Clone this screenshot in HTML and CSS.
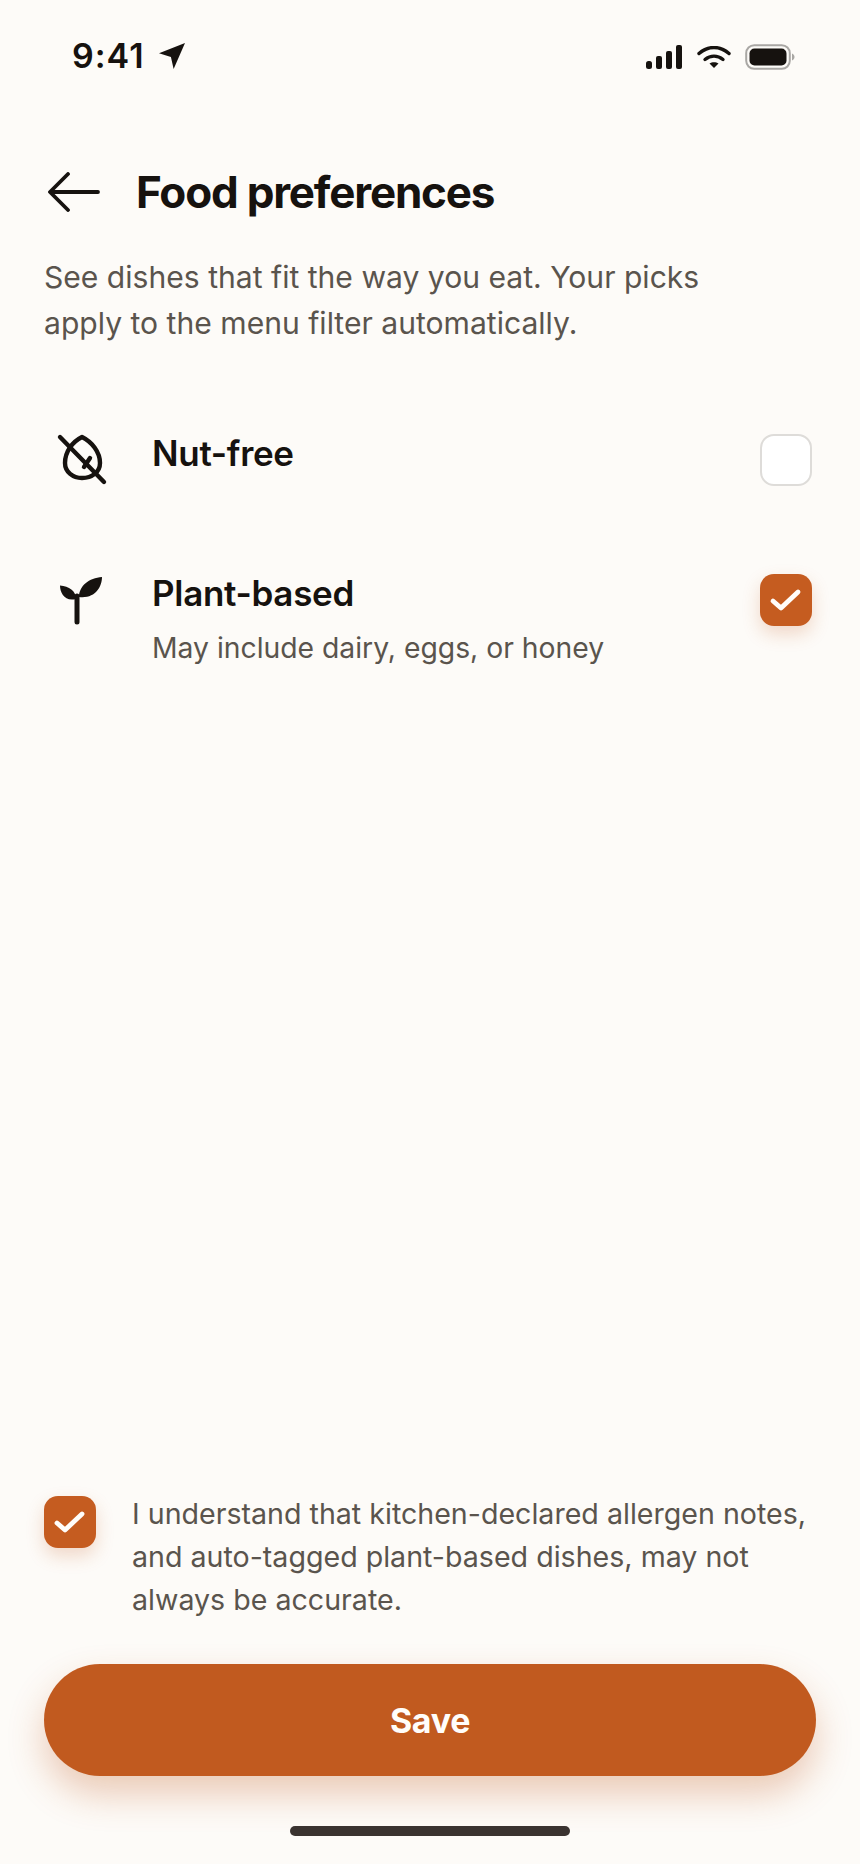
FILE: index.html
```html
<!DOCTYPE html>
<html lang="en">
<head>
<meta charset="utf-8">
<title>Food preferences</title>
<link rel="stylesheet" href="styles.css">
</head>
<body>
<div class="screen">
  <div class="status">
    <div class="status-left">
      <span class="time">9:41</span>
      <svg class="loc" width="26" height="26" viewBox="0 0 24 24"><path d="M0 9.500 24 0 13.500 24 11 13z" fill="#16120f"/></svg>
    </div>
    <div class="status-right">
      <svg width="36" height="24" viewBox="0 0 36 24"><g fill="#16120f"><rect x="0" y="16" width="6" height="8" rx="2.500"/><rect x="10" y="11" width="6" height="13" rx="2"/><rect x="20" y="6" width="6" height="18" rx="2"/><rect x="30" y="0" width="6" height="24" rx="2"/></g></svg>
      <svg width="34" height="22" viewBox="0 0 34 22"><g fill="none" stroke="#16120f" stroke-width="3.400" stroke-linecap="round"><path d="M2 7.500C11 -.500 23 -.500 32 7.500"/><path d="M8 13.500C13.500 9 20.500 9 26 13.500"/></g><path d="M12.500 17.500C15 15.800 19 15.800 21.500 17.500L17 22z" fill="#16120f"/></svg>
      <svg width="50" height="26" viewBox="0 0 50 26"><rect x="1.200" y="1.200" width="43.600" height="23.600" rx="8" fill="none" stroke="#a9a7a4" stroke-width="2"/><rect x="4.500" y="4.500" width="37" height="17" rx="5" fill="#16120f"/><path d="M47 9.500C49 10.500 49.500 11.800 49.500 13S49 15.500 47 16.500z" fill="#a9a7a4"/></svg>
    </div>
  </div>

  <header class="head">
    <svg class="back" width="52" height="40" viewBox="0 0 52 40"><path d="M50 20H3M20 2 2 20l18 18" fill="none" stroke="#16120f" stroke-width="3.800" stroke-linecap="round" stroke-linejoin="round"/></svg>
    <h1 class="title">Food preferences</h1>
  </header>

  <p class="intro">See dishes that fit the way you eat. Your picks apply to the menu filter automatically.</p>

  <div class="list">
    <div class="row">
      <svg class="row-icon" width="60" height="60" viewBox="0 0 60 60"><g fill="none" stroke="#16120f" stroke-width="4.400" stroke-linecap="round" stroke-linejoin="round"><path d="M28 6C38 11 46 21 46 32 46 41 38 47 28 47 19 47 11 41 11 32 11 21 18 11 28 6z"/><path d="M6 6 50 51"/><path d="M36 27 30 36"/></g></svg>
      <div class="row-text"><div class="row-title">Nut-free</div></div>
      <span class="box"></span>
    </div>
    <div class="row">
      <svg class="row-icon" width="60" height="60" viewBox="0 0 60 60"><path d="M23 25V51" fill="none" stroke="#16120f" stroke-width="5" stroke-linecap="round"/><path d="M22 28C22 20 15 15 6 14.500 6 22 11 31 22 28zM25 26C25 15 35 7 48 6 48 16 41 28 25 26z" fill="#16120f"/></svg>
      <div class="row-text">
        <div class="row-title">Plant-based</div>
        <div class="row-sub">May include dairy, eggs, or honey</div>
      </div>
      <span class="box box-on"><svg width="52" height="52" viewBox="0 0 52 52"><path d="M13 27 21 34 38 18" fill="none" stroke="#fffdfa" stroke-width="4.800" stroke-linecap="round" stroke-linejoin="round"/></svg></span>
    </div>
  </div>

  <div class="foot">
    <div class="consent">
      <span class="box box-on"><svg width="52" height="52" viewBox="0 0 52 52"><path d="M13 27 21 34 38 18" fill="none" stroke="#fffdfa" stroke-width="4.800" stroke-linecap="round" stroke-linejoin="round"/></svg></span>
      <p class="consent-text">I understand that kitchen-declared allergen notes, and auto-tagged plant-based dishes, may not always be accurate.</p>
    </div>
    <button class="save" type="button">Save</button>
    <div class="home"></div>
  </div>
</div>
</body>
</html>
```
FILE: styles.css
```css
* { box-sizing: border-box; }
html, body { margin: 0; padding: 0; }
body { background: #fdfbf8; font-family: Inter, "Liberation Sans", sans-serif; color: #16120f; }
.screen { width: 860px; height: 1864px; display: flex; flex-direction: column; padding: 0 44px; overflow: hidden; }
.status { height: 68px; margin-top: 32px; display: flex; justify-content: space-between; align-items: flex-start; padding: 10px 0 0 28px; }
.status-left { display: flex; align-items: center; gap: 14px; height: 28px; }
.time { font-size: 34px; font-weight: 600; line-height: 28px; letter-spacing: 1px; }
.status-right { display: flex; align-items: center; gap: 14.500px; padding: 2px 0 0 0; margin-right: 21px; }
.head { display: flex; align-items: center; height: 60px; margin-top: 62px; }
.back { margin-left: 4px; flex: none; }
.title { margin: 0 0 0 36px; font-size: 44px; font-weight: 700; letter-spacing: -1.200px; line-height: 60px; }
.intro { margin: 32px 0 0; width: 680px; font-size: 30.100px; line-height: 46px; color: #5a544d; }
.list { margin-top: 85px; display: flex; flex-direction: column; gap: 80px; }
.row { display: flex; align-items: flex-start; }
.row-icon { flex: none; margin: 0 0 0 10px; }
.row-text { flex: 1; margin-left: 38px; }
.row-title { font-size: 35px; font-weight: 600; line-height: 44px; letter-spacing: -.3px; }
.row-sub { margin-top: 12px; font-size: 28.300px; line-height: 42px; color: #5a544d; }
.box { flex: none; width: 52px; height: 52px; margin-top: 3px; border-radius: 14px; border: 2px solid #dedcd9; background: #fff; margin-right: 4px; }
.box-on { border: 0; background: #c55c20; box-shadow: 0 8px 18px rgba(197, 92, 32, .22); display: block; }
.box-on svg { display: block; }
.foot { margin-top: auto; }
.consent { display: flex; align-items: flex-start; gap: 36px; }
.consent .box { margin: 0; }
.consent-text { margin: -4px -10px 0 0; font-size: 28.600px; line-height: 43px; color: #5a544d; }
.save { display: block; width: 772px; height: 112px; margin-top: 43px; border: 0; border-radius: 56px; background: #c15a1f; color: #fffdfa; font: 700 34px Inter, "Liberation Sans", sans-serif; letter-spacing: -.3px; box-shadow: 0 18px 36px rgba(193, 90, 31, .3); }
.home { width: 280px; height: 10px; border-radius: 5px; background: #3a3330; margin: 50px auto 28px; }
```
